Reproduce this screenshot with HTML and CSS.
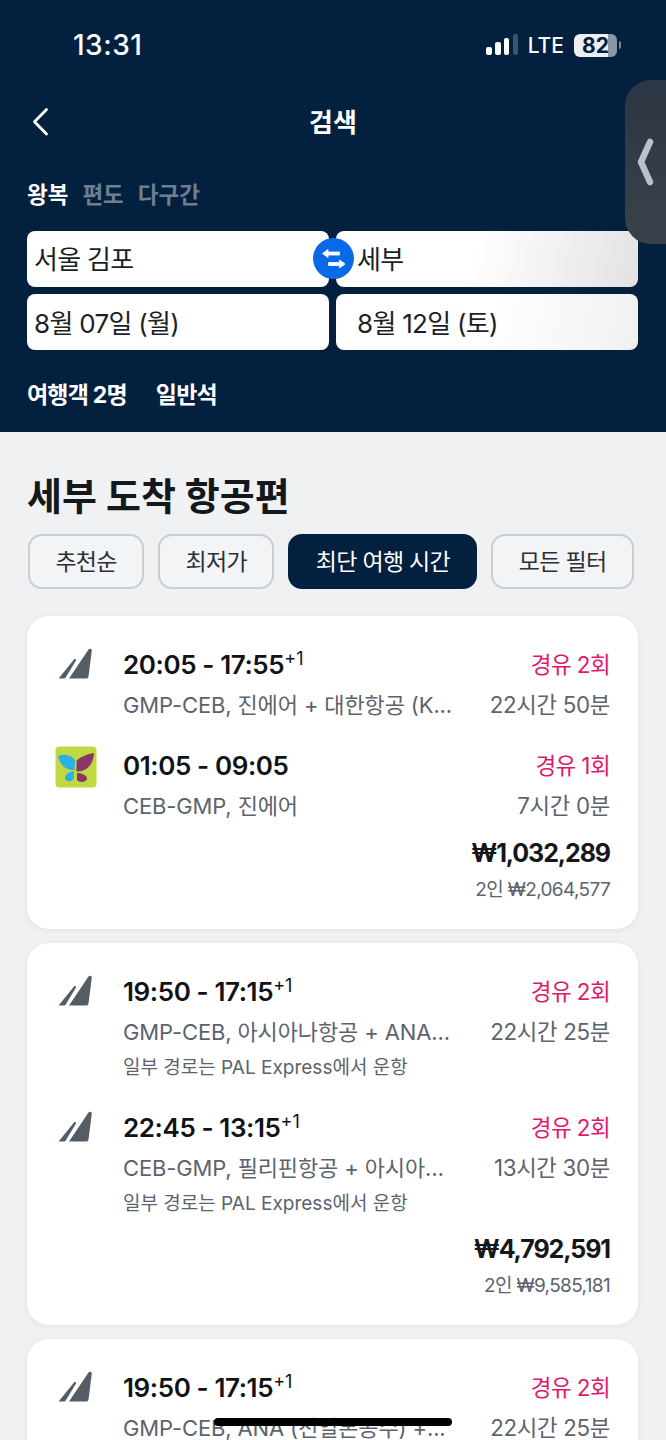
FILE: index.html
```html
<!DOCTYPE html>
<html lang="ko">
<head>
<meta charset="utf-8">
<title>검색</title>
<link rel="stylesheet" href="styles.css">
</head>
<body>
<div class="screen">
  <header class="hero">
    <div class="status">
      <span class="clock">13:31</span>
      <div class="status-right">
        <svg class="signal" width="34" height="24" viewBox="0 0 34 24"><rect x="2" y="14" width="6" height="8" rx="2" fill="#fff"/><rect x="11" y="9" width="6" height="13" rx="2" fill="#fff"/><rect x="20" y="5" width="5" height="17" rx="2" fill="#fff"/><rect x="29" y="1" width="5" height="21" rx="2" fill="#3e5268"/></svg>
        <span class="lte">LTE</span>
        <span class="battery"><span class="battery-num">82</span></span>
        <span class="battery-tip"></span>
      </div>
    </div>
    <div class="nav">
      <svg class="back" width="20" height="30" viewBox="0 0 20 30"><path d="M15.500 2.500 3.500 14.800 15.500 27" fill="none" stroke="#fff" stroke-width="2.800" stroke-linecap="round" stroke-linejoin="round"/></svg>
      <h1 class="nav-title">검색</h1>
    </div>
    <div class="trip-tabs">
      <span class="trip-on">왕복</span>
      <span class="trip-off">편도</span>
      <span class="trip-off">다구간</span>
    </div>
    <div class="fields">
      <div class="field">서울 김포</div>
      <div class="field field-fade">세부</div>
      <div class="field field-low">8월 07일 (월)</div>
      <div class="field field-low field-fade-soft">8월 12일 (토)</div>
      <span class="swap">
        <svg width="41" height="41" viewBox="0 0 41 41"><path d="M9.500 15.500 15 11.500V14H26.500V17H15V19.500ZM32 26 26.500 22V24.500H15.500V27.500H26.500V30Z" fill="#fff" stroke="#fff" stroke-width="0.800" stroke-linejoin="round"/></svg>
      </span>
    </div>
    <div class="pax"><span>여행객 2명</span><span>일반석</span></div>
  </header>

  <main class="results">
    <h2 class="results-title">세부 도착 항공편</h2>
    <div class="chips">
      <span class="chip">추천순</span>
      <span class="chip">최저가</span>
      <span class="chip chip-on">최단 여행 시간</span>
      <span class="chip">모든 필터</span>
    </div>

    <article class="card">
      <div class="leg">
        <svg class="tail" width="42" height="42" viewBox="0 0 42 42"><path d="M4 33 19 14.500C20 13.500 21.500 14.500 21 15.500L11 32C10.500 33 9.500 33.500 8.500 33.500H5C4 33.500 3.500 33.800 4 33ZM14 33.500 33.500 4.500C34.500 3 37 3.500 36.800 5.500L33.500 31.500C33.300 33 32.500 33.500 31 33.500Z" fill="#545c66"/></svg>
        <div class="leg-main"><div class="time">20:05 - 17:55<sup class="plus">+1</sup></div><div class="route">GMP-CEB, 진에어 + 대한항공 (K...</div></div>
        <div class="leg-side"><div class="stops">경유 2회</div><div class="dur">22시간 50분</div></div>
      </div>
      <div class="leg">
        <svg class="logo" width="42" height="42" viewBox="0 0 42 42"><rect x="0.500" y="0.500" width="41" height="41" rx="4" fill="#c2d840"/><path d="M3 10C9 7 17 10 20 14L19.500 24C12 24.500 5 20 3 10Z" fill="#2ab0e6"/><path d="M39 7C32 8 24.500 11 21.500 15V25.500C31 26 38.500 19 39 7Z" fill="#8a3768"/><path d="M19 25 18.500 33C15 37 9.500 35.500 10 31 11 27.500 15 26 19 25Z" fill="#2ab0e6"/><path d="M22 27 22 34C25 37.500 32.500 36 32 32 31.500 29 26 27 22 27Z" fill="#8a3768"/></svg>
        <div class="leg-main"><div class="time">01:05 - 09:05</div><div class="route">CEB-GMP, 진에어</div></div>
        <div class="leg-side"><div class="stops">경유 1회</div><div class="dur">7시간 0분</div></div>
      </div>
      <div class="price-box"><div class="price">₩1,032,289</div><div class="total">2인 ₩2,064,577</div></div>
    </article>

    <article class="card">
      <div class="leg">
        <svg class="tail" width="42" height="42" viewBox="0 0 42 42"><path d="M4 33 19 14.500C20 13.500 21.500 14.500 21 15.500L11 32C10.500 33 9.500 33.500 8.500 33.500H5C4 33.500 3.500 33.800 4 33ZM14 33.500 33.500 4.500C34.500 3 37 3.500 36.800 5.500L33.500 31.500C33.300 33 32.500 33.500 31 33.500Z" fill="#545c66"/></svg>
        <div class="leg-main"><div class="time">19:50 - 17:15<sup class="plus">+1</sup></div><div class="route">GMP-CEB, 아시아나항공 + ANA...</div><div class="note">일부 경로는 PAL Express에서 운항</div></div>
        <div class="leg-side"><div class="stops">경유 2회</div><div class="dur">22시간 25분</div></div>
      </div>
      <div class="leg">
        <svg class="tail" width="42" height="42" viewBox="0 0 42 42"><path d="M4 33 19 14.500C20 13.500 21.500 14.500 21 15.500L11 32C10.500 33 9.500 33.500 8.500 33.500H5C4 33.500 3.500 33.800 4 33ZM14 33.500 33.500 4.500C34.500 3 37 3.500 36.800 5.500L33.500 31.500C33.300 33 32.500 33.500 31 33.500Z" fill="#545c66"/></svg>
        <div class="leg-main"><div class="time">22:45 - 13:15<sup class="plus">+1</sup></div><div class="route">CEB-GMP, 필리핀항공 + 아시아…</div><div class="note">일부 경로는 PAL Express에서 운항</div></div>
        <div class="leg-side"><div class="stops">경유 2회</div><div class="dur">13시간 30분</div></div>
      </div>
      <div class="price-box price-box-tight"><div class="price">₩4,792,591</div><div class="total">2인 ₩9,585,181</div></div>
    </article>

    <article class="card">
      <div class="leg">
        <svg class="tail" width="42" height="42" viewBox="0 0 42 42"><path d="M4 33 19 14.500C20 13.500 21.500 14.500 21 15.500L11 32C10.500 33 9.500 33.500 8.500 33.500H5C4 33.500 3.500 33.800 4 33ZM14 33.500 33.500 4.500C34.500 3 37 3.500 36.800 5.500L33.500 31.500C33.300 33 32.500 33.500 31 33.500Z" fill="#545c66"/></svg>
        <div class="leg-main"><div class="time">19:50 - 17:15<sup class="plus">+1</sup></div><div class="route">GMP-CEB, ANA (전일본공수) +...</div></div>
        <div class="leg-side"><div class="stops">경유 2회</div><div class="dur">22시간 25분</div></div>
      </div>
    </article>
  </main>

  <div class="handle">
    <svg width="20" height="48" viewBox="0 0 20 48"><path d="M15 4 6 24 15 44" fill="none" stroke="#b9c1cf" stroke-width="6.500" stroke-linecap="round" stroke-linejoin="round"/></svg>
  </div>
  <div class="home-bar"></div>
</div>
</body>
</html>
```
FILE: styles.css
```css
* { box-sizing: border-box; }
html, body { margin: 0; padding: 0; }
body {
  width: 666px;
  height: 1440px;
  overflow: hidden;
  font-family: Inter, "Noto Sans CJK KR", sans-serif;
  background: #eff1f3;
}
.screen { position: relative; width: 666px; height: 1440px; overflow: hidden; }

.hero { height: 432px; background: #03203f; padding: 0 28px 0 27px; color: #fff; }
.status { height: 80px; padding: 24px 17px 0 46px; display: flex; justify-content: space-between; align-items: flex-start; }
.clock { font-size: 28px; line-height: 42px; font-weight: 500; letter-spacing: 0.5px; }
.status-right { display: flex; align-items: center; height: 42px; }
.signal { margin-right: 10px; }
.lte { font-size: 21px; font-weight: 500; margin-right: 10px; letter-spacing: 0; }
.battery { width: 43px; height: 23px; border-radius: 6px; background: linear-gradient(90deg, #eceef1 0 80%, #8b95a3 80%); color: #03203f; display: flex; align-items: center; justify-content: center; }
.battery-num { font-size: 21px; font-weight: 700; }
.battery-tip { width: 2px; height: 8px; margin-left: 2px; background: #7d8896; border-radius: 0 2px 2px 0; }

.nav { height: 84px; position: relative; display: flex; align-items: center; justify-content: center; }
.back { position: absolute; left: 4px; top: 27px; }
.nav-title { margin: 0 0 0 1px; font-size: 26px; font-weight: 700; line-height: 84px; position: relative; top: 1px; }

.trip-tabs { height: 36px; margin-top: 12px; display: flex; gap: 14px; font-size: 22.500px; font-weight: 700; line-height: 37px; }
.trip-on { color: #fff; }
.trip-off { color: #6f7f92; }

.fields { position: relative; margin-top: 19px; display: grid; grid-template-columns: 302px 302px; gap: 7px; width: 611px; }
.field { height: 56px; border-radius: 8px; background: #fff; color: #1c1f24; font-size: 26px; letter-spacing: -0.700px; line-height: 57px; padding-left: 7px; white-space: nowrap; }
.field-low { line-height: 59px; }
.field-fade { padding-left: 21px; background: linear-gradient(105deg, #fff 45%, #e2e2e2 100%); }
.field-fade-soft { padding-left: 21px; background: linear-gradient(105deg, #fff 50%, #f0f0f0 100%); }
.swap { position: absolute; left: 286px; top: 7px; width: 41px; height: 41px; border-radius: 50%; background: #0a69e6; }
.swap svg { display: block; }

.pax { margin-top: 27px; display: flex; gap: 29px; font-size: 23px; font-weight: 700; line-height: 36px; letter-spacing: -0.800px; }

.results { padding: 39px 28px 0 27px; }
.results-title { margin: 0; font-size: 38px; line-height: 50px; font-weight: 700; color: #14171c; }
.chips { margin-top: 13px; display: flex; gap: 14px; padding-left: 1px; }
.chip { height: 55px; border: 2px solid #c9ced3; border-radius: 14px; padding: 0 25.400px; font-size: 23px; letter-spacing: -0.700px; line-height: 52px; color: #2b3037; white-space: nowrap; background: #f3f4f6; }
.chip-on { background: #03203f; border-color: #03203f; color: #fff; }

.card { margin-top: 14px; background: #fff; border-radius: 22px; padding: 29px 28px 22px; box-shadow: 0 1px 6px rgba(30, 40, 60, 0.07); }
.chips + .card { margin-top: 27px; }
.leg { display: flex; align-items: flex-start; margin-bottom: 20px; }
.leg:nth-last-child(2) { margin-bottom: 6px; }
.tail, .logo { flex: none; width: 42px; height: 42px; margin-right: 26px; }
.leg-main { flex: 1; min-width: 0; }
.time { height: 40px; font-size: 26px; letter-spacing: -0.400px; line-height: 40px; font-weight: 600; color: #101215; white-space: nowrap; }
.plus { font-size: 18px; font-weight: 400; letter-spacing: 0; line-height: 0; vertical-align: 9px; }
.route { height: 25px; margin: 8px 0; font-size: 22px; letter-spacing: -0.130px; line-height: 25px; color: #5c636d; white-space: nowrap; }
.note { font-size: 19px; line-height: 30px; height: 35px; color: #5c636d; white-space: nowrap; }
.leg-side { text-align: right; flex: none; }
.stops { height: 40px; line-height: 40px; font-size: 22.500px; letter-spacing: -0.600px; color: #dd1a6e; }
.dur { height: 24px; margin: 8px 0 9px; line-height: 24px; font-size: 22.300px; letter-spacing: -0.300px; color: #5c636d; white-space: nowrap; }
.price-box { text-align: right; }
.price-box-tight { margin-top: -1px; }
.price { font-size: 25px; letter-spacing: -1.100px; font-weight: 700; line-height: 40px; color: #14171c; }
.total { font-size: 19px; letter-spacing: -0.650px; line-height: 34px; color: #5c636d; }

.handle { position: absolute; right: 0; top: 80px; width: 41px; height: 164px; border-radius: 26px 0 0 26px; background: linear-gradient(#2d3644, #3a414a); display: flex; align-items: center; padding-left: 10px; }
.home-bar { position: absolute; left: 214px; top: 1418px; width: 238px; height: 8px; border-radius: 4px; background: #000; }
```
